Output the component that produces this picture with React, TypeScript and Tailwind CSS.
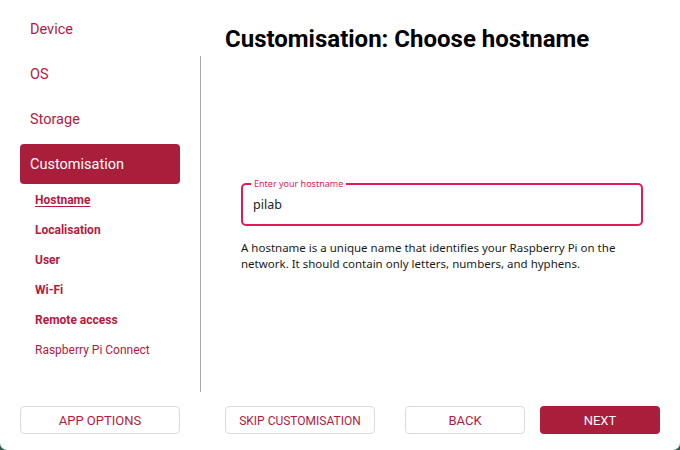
import React from "react";

const RED_TEXT = "text-[#b5193f]";

export default function App() {
  const main = ["Device", "OS", "Storage"];
  const subs = [
    { t: "Hostname", bold: true, active: true },
    { t: "Localisation", bold: true },
    { t: "User", bold: true },
    { t: "Wi-Fi", bold: true },
    { t: "Remote access", bold: true },
    { t: "Raspberry Pi Connect", bold: false },
  ];
  return (
    <div className="w-[680px] h-[450px] bg-[#2f5a4c]" style={{ fontFamily: "Roboto, sans-serif" }}>
      <div className="w-full h-full bg-white rounded-b-[7px] flex flex-col">
        <div className="flex h-[392px]">
          <div className="w-[200px] pt-[9px] px-[20px] flex flex-col">
            {main.map((m) => (
              <div key={m} className={`h-[40px] mb-[5px] flex items-center px-[10px] pt-[2px] text-[14.5px] ${RED_TEXT}`}>
                {m}
              </div>
            ))}
            <div className="h-[40px] flex items-center px-[10px] pt-[2px] text-[14.5px] text-white bg-[#a91e3a] rounded-[4px]">
              Customisation
            </div>
            {subs.map((s) => (
              <div
                key={s.t}
                className={`h-[30px] flex items-center pl-[15px] pt-[2px] text-[12px] ${RED_TEXT} ${s.bold ? "font-bold" : ""} ${s.active ? "underline underline-offset-2" : ""}`}
              >
                {s.t}
              </div>
            ))}
          </div>
          <div className="w-px bg-[#a8a8a8] mt-[56px]" />
          <div className="flex-1 flex flex-col">
            <div className="pl-[24px] pt-[24px] text-[24px] font-bold text-black leading-[30px]">
              Customisation: Choose hostname
            </div>
            <div className="pl-[40px] pr-[37px] mt-[129px]">
              <div className="relative h-[43px] border-2 border-[#e3195a] rounded-[5px] flex items-center px-[10px]">
                <span
                  className="absolute left-[8px] -top-[7px] bg-white px-[3px] text-[9px] leading-[12px] text-[#e3195a]"
                  style={{ fontFamily: "'Noto Sans', sans-serif" }}
                >
                  Enter your hostname
                </span>
                <span className="text-[12.5px] text-[#222] pt-[1px]" style={{ fontFamily: "'Noto Sans', sans-serif" }}>
                  pilab
                </span>
              </div>
              <p
                className="mt-[14px] text-[11.5px] leading-[16px] text-[#1a1a1a]"
                style={{ fontFamily: "'Noto Sans', sans-serif" }}
              >
                A hostname is a unique name that identifies your Raspberry Pi on the network. It should contain only letters, numbers, and hyphens.
              </p>
            </div>
          </div>
        </div>
        <div className="flex items-start pt-[14px] pl-[20px]">
          <button className={`w-[160px] h-[28px] pt-[1px] border border-[#dcdcdc] rounded-[4px] text-[13px] ${RED_TEXT}`}>APP OPTIONS</button>
          <button className={`ml-[45px] w-[150px] h-[28px] pt-[1px] border border-[#dcdcdc] rounded-[4px] text-[12px] ${RED_TEXT}`}>SKIP CUSTOMISATION</button>
          <button className={`ml-[30px] w-[120px] h-[28px] pt-[1px] border border-[#dcdcdc] rounded-[4px] text-[13px] ${RED_TEXT}`}>BACK</button>
          <button className="ml-[15px] w-[120px] h-[28px] pt-[1px] rounded-[4px] text-[13px] text-white bg-[#a91e3a]">NEXT</button>
        </div>
      </div>
    </div>
  );
}
